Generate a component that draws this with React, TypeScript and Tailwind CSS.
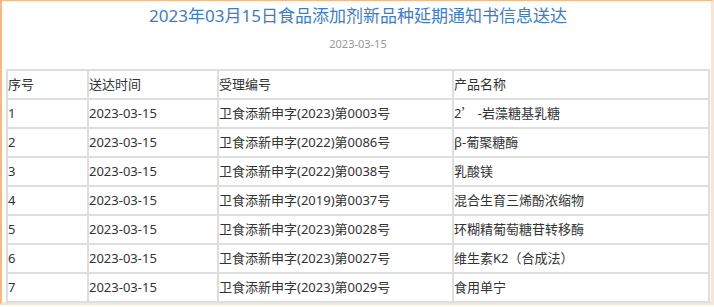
import type { ReactNode } from 'react';

const rows: [string, string, string, ReactNode][] = [
  [
    '1',
    '2023-03-15',
    '卫食添新申字(2023)第0003号',
    <>
      2<span className="font-['Noto_Sans_CJK_SC',sans-serif]">’</span> -岩藻糖基乳糖
    </>,
  ],
  ['2', '2023-03-15', '卫食添新申字(2022)第0086号', 'β-葡聚糖酶'],
  ['3', '2023-03-15', '卫食添新申字(2022)第0038号', '乳酸镁'],
  ['4', '2023-03-15', '卫食添新申字(2019)第0037号', '混合生育三烯酚浓缩物'],
  ['5', '2023-03-15', '卫食添新申字(2023)第0028号', '环糊精葡萄糖苷转移酶'],
  ['6', '2023-03-15', '卫食添新申字(2023)第0027号', '维生素K2（合成法）'],
  ['7', '2023-03-15', '卫食添新申字(2023)第0029号', '食用单宁'],
];

const cell = 'h-[29px] border-2 border-[#dedede] p-0 text-left font-normal align-middle';

export default function App() {
  return (
    <div className="h-[307px] w-[714px] bg-white font-['Noto_Sans','Noto_Sans_CJK_SC',sans-serif]">
      <div className="h-[305px] border-t border-r-[3px] border-b-[3px] border-l-2 border-t-[#fbb682] border-r-[#fde4d2] border-b-[#fde4d2] border-l-[#fbb682] pr-px pl-1">
        <h1 className="pt-[3px] text-center text-[17px] leading-6 text-[#3d7ccb]">
          2023年03月15日食品添加剂新品种延期通知书信息送达
        </h1>
        <p className="mt-[8px] text-center text-[11px] leading-4 text-[#999]">2023-03-15</p>
        <table className="mt-[17px] w-[704px] table-fixed border-collapse text-[13px] text-[#333]">
          <colgroup>
            <col className="w-[81px]" />
            <col className="w-[130px]" />
            <col className="w-[235px]" />
            <col />
          </colgroup>
          <thead>
            <tr>
              <th className={cell}>序号</th>
              <th className={cell}>送达时间</th>
              <th className={cell}>受理编号</th>
              <th className={cell}>产品名称</th>
            </tr>
          </thead>
          <tbody>
            {rows.map((r) => (
              <tr key={r[0]}>
                {r.map((v, i) => (
                  <td key={i} className={cell}>
                    {v}
                  </td>
                ))}
              </tr>
            ))}
          </tbody>
        </table>
      </div>
    </div>
  );
}
